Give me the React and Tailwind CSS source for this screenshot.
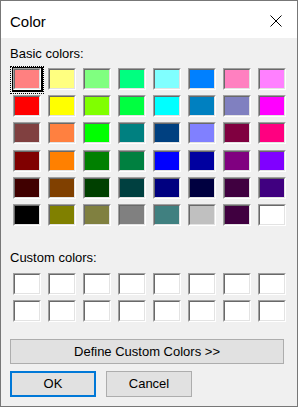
import React from "react";

const basic = [
  ["#FF8080", "#FFFF80", "#80FF80", "#00FF80", "#80FFFF", "#0080FF", "#FF80C0", "#FF80FF"],
  ["#FF0000", "#FFFF00", "#80FF00", "#00FF40", "#00FFFF", "#0080C0", "#8080C0", "#FF00FF"],
  ["#804040", "#FF8040", "#00FF00", "#008080", "#004080", "#8080FF", "#800040", "#FF0080"],
  ["#800000", "#FF8000", "#008000", "#008040", "#0000FF", "#0000A0", "#800080", "#8000FF"],
  ["#400000", "#804000", "#004000", "#004040", "#000080", "#000040", "#400040", "#400080"],
  ["#000000", "#808000", "#808040", "#808080", "#408080", "#C0C0C0", "#400040", "#FFFFFF"],
];

function Swatch({ color, selected }) {
  return (
    <div className="relative w-[28px] h-[22px]">
      <div className="w-full h-full border border-t-[#a0a0a0] border-l-[#a0a0a0] border-b-white border-r-white">
        <div
          className="w-full h-full border border-t-[#696969] border-l-[#696969] border-b-[#e3e3e3] border-r-[#e3e3e3]"
          style={{ backgroundColor: color }}
        />
      </div>
      {selected && (
        <>
          <div className="absolute left-[-1px] top-[-1px] right-[-2px] bottom-[-2px] border border-black border-r-2 border-b-2 pointer-events-none" />
          <div className="absolute left-[-3px] top-[-2px] right-[-3px] bottom-[-4px] border border-dotted border-black pointer-events-none" />
        </>
      )}
    </div>
  );
}

export default function App() {
  const font = "font-['Liberation_Sans',Arial,sans-serif]";
  return (
    <div className={`w-[298px] h-[407px] border border-[#777777] bg-[#f0f0f0] flex flex-col text-black ${font}`}>
      <div className="h-[37px] bg-white flex items-center justify-between pl-[9px] pr-[15px]">
        <span className="text-[15px] leading-[17px] mt-[3px]">Color</span>
        <svg width="12" height="12" viewBox="0 0 12 12" className="mt-[3px]">
          <path d="M0.5 0.5 L11.5 11.5 M11.5 0.5 L0.5 11.5" stroke="#000" strokeWidth="1" fill="none" />
        </svg>
      </div>
      <div className="flex flex-col pl-[9px]">
        <div className="mt-[8px] text-[13px] leading-[16px]">Basic colors:</div>
        <div className="mt-[6px] ml-[3px] grid grid-cols-[repeat(8,28px)] auto-rows-[22px] gap-x-[7px] gap-y-[5.2px]">
          {basic.flat().map((c, i) => (
            <Swatch key={i} color={c} selected={i === 0} />
          ))}
        </div>
        <div className="mt-[24px] text-[13px] leading-[16px]">Custom colors:</div>
        <div className="mt-[7px] ml-[3px] grid grid-cols-[repeat(8,28px)] auto-rows-[22px] gap-x-[7px] gap-y-[5px]">
          {Array.from({ length: 16 }).map((_, i) => (
            <Swatch key={i} color="#FFFFFF" />
          ))}
        </div>
        <button className="mt-[17px] w-[274px] h-[25px] bg-[#e1e1e1] border border-[#adadad] text-[13px] flex items-center justify-center">
          Define Custom Colors &gt;&gt;
        </button>
        <div className="mt-[7px] flex gap-[10px]">
          <button className="w-[86px] h-[26px] bg-[#e1e1e1] border-2 border-[#0078d7] text-[13px] flex items-center justify-center">
            OK
          </button>
          <button className="w-[86px] h-[26px] bg-[#e1e1e1] border border-[#adadad] text-[13px] flex items-center justify-center">
            Cancel
          </button>
        </div>
      </div>
    </div>
  );
}
